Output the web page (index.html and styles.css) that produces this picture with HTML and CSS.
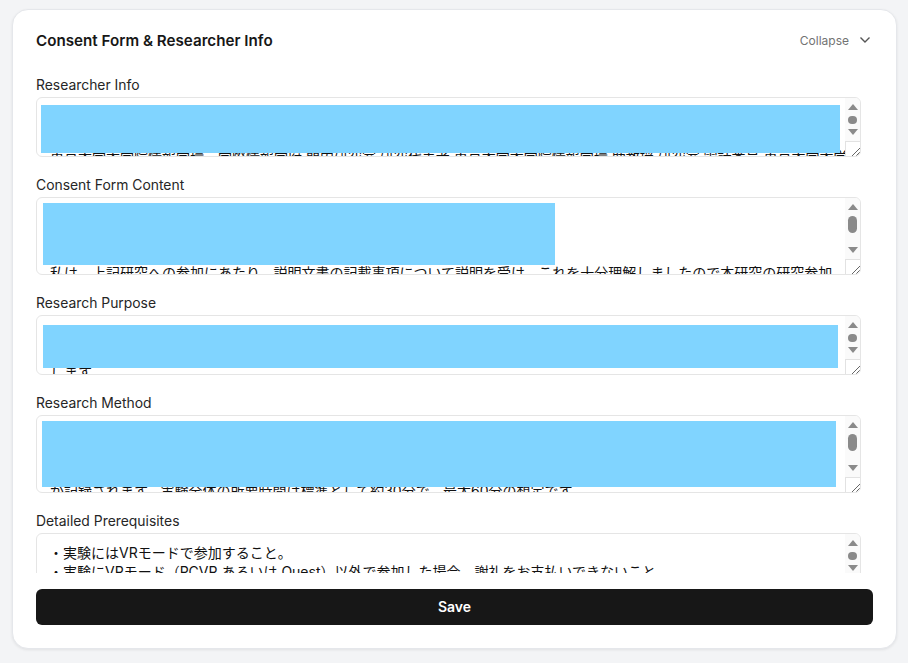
FILE: index.html
```html
<!DOCTYPE html>
<html lang="en">
<head>
<meta charset="utf-8">
<title>Consent Form &amp; Researcher Info</title>
<link rel="stylesheet" href="styles.css">
</head>
<body>
<svg class="defs" width="0" height="0" aria-hidden="true">
  <symbol id="up" viewBox="0 0 10 6"><path d="M5 0 10 6H0Z"/></symbol>
  <symbol id="down" viewBox="0 0 10 6"><path d="M0 0H10L5 6Z"/></symbol>
  <symbol id="grip" viewBox="0 0 15 15"><path d="M6 14 14 6M10 14 14 10" fill="none" stroke="#666" stroke-width="1"/></symbol>
</svg>
<main class="card">
  <header class="head">
    <h1 class="title">Consent Form &amp; Researcher Info</h1>
    <button class="collapse" type="button">Collapse
      <svg class="chev" viewBox="0 0 12 8" width="12" height="8"><path d="M1.5 1.5 6 6l4.5-4.5" fill="none" stroke="#555" stroke-width="1.4"/></svg>
    </button>
  </header>
  <div class="form">
    <section class="field">
      <label class="label">Researcher Info</label>
      <div class="box h60">
        <div class="text t1">東京大学大学院情報学環・学際情報学府 門内研究室 研究代表者 東京大学大学院情報学環 助教授 研究室 電話番号 東京大学大学院情報学環 連絡先情報</div>
        <div class="redact r1"></div>
        <div class="bar"><div class="track short"><svg class="arrow"><use href="#up"/></svg><span class="thumb small"></span><svg class="arrow"><use href="#down"/></svg></div><div class="grip"><svg width="15" height="15"><use href="#grip"/></svg></div></div>
      </div>
    </section>
    <section class="field">
      <label class="label">Consent Form Content</label>
      <div class="box h78">
        <div class="text t2">私は、上記研究への参加にあたり、説明文書の記載事項について説明を受け、これを十分理解しましたので本研究の研究参加</div>
        <div class="redact r2"></div>
        <div class="bar"><div class="track tall"><svg class="arrow"><use href="#up"/></svg><span class="thumb big"></span><svg class="arrow"><use href="#down"/></svg></div><div class="grip"><svg width="15" height="15"><use href="#grip"/></svg></div></div>
      </div>
    </section>
    <section class="field">
      <label class="label">Research Purpose</label>
      <div class="box h60">
        <div class="text t3">します</div>
        <div class="redact r3"></div>
        <div class="bar"><div class="track short"><svg class="arrow"><use href="#up"/></svg><span class="thumb small"></span><svg class="arrow"><use href="#down"/></svg></div><div class="grip"><svg width="15" height="15"><use href="#grip"/></svg></div></div>
      </div>
    </section>
    <section class="field">
      <label class="label">Research Method</label>
      <div class="box h78">
        <div class="text t4">が記録されます。実験全体の所要時間は標準として約30分で、最大60分の想定です。</div>
        <div class="redact r4"></div>
        <div class="bar"><div class="track tall"><svg class="arrow"><use href="#up"/></svg><span class="thumb big"></span><svg class="arrow"><use href="#down"/></svg></div><div class="grip"><svg width="15" height="15"><use href="#grip"/></svg></div></div>
      </div>
    </section>
    <section class="field">
      <label class="label">Detailed Prerequisites</label>
      <div class="box h60">
        <div class="text t5">・実験にはVRモードで参加すること。<br>・実験にVRモード（PCVR あるいは Quest）以外で参加した場合、謝礼をお支払いできないこと</div>
        <div class="bar"><div class="track short"><svg class="arrow"><use href="#up"/></svg><span class="thumb small"></span><svg class="arrow"><use href="#down"/></svg></div></div>
      </div>
    </section>
  </div>
  <button class="save" type="button">Save</button>
</main>
</body>
</html>
```

FILE: styles.css
```css
* { box-sizing: border-box; }
html, body { height: 100%; }
body {
  margin: 0;
  padding: 9px 11px 14px 12px;
  background: #f3f4f6;
  font-family: Inter, "Noto Sans CJK JP", "Liberation Sans", sans-serif;
  color: #171717;
  overflow: hidden;
}
.defs { position: absolute; }
.card {
  height: 640px;
  background: #fff;
  border: 1px solid #e5e7eb;
  border-radius: 16px;
  box-shadow: 0 1px 3px rgba(0, 0, 0, 0.08);
  padding: 16px 23px 23px;
  display: flex;
  flex-direction: column;
}
.head {
  display: flex;
  justify-content: space-between;
  align-items: center;
  height: 28px;
  flex: none;
}
.title { margin: 0; font-size: 15.2px; font-weight: 600; }
.collapse {
  display: flex;
  align-items: center;
  gap: 10px;
  padding: 0;
  border: 0;
  background: none;
  font: inherit;
  font-size: 12px;
  color: #737373;
}
.chev { display: block; margin-right: 2px; }
.form {
  flex: none;
  height: 497px;
  margin-top: 22px;
  padding-right: 12px;
  overflow: hidden;
  display: flex;
  flex-direction: column;
  gap: 19px;
}
.field { flex: none; display: flex; flex-direction: column; gap: 3px; }
.label { font-size: 13.9px; font-weight: 400; line-height: 18px; height: 18px; color: #262626; }
.box {
  position: relative;
  flex: none;
  border: 1px solid #e5e5e5;
  border-radius: 6px;
  overflow: hidden;
  background: #fff;
}
.h60 { height: 60px; }
.h78 { height: 78px; }
.text {
  font-size: 14px;
  line-height: 20px;
  white-space: nowrap;
  padding-left: 13px;
  color: #111;
}
.t1 { padding-top: 49px; }
.t2 { padding-top: 65px; }
.t3 { padding-top: 46px; }
.t4 { padding-top: 65px; }
.t5 { padding-top: 9px; padding-left: 12px; line-height: 19px; }
.redact { position: absolute; background: #80d4ff; }
.r1 { left: 4px; top: 7px; width: 799px; height: 48px; }
.r2 { left: 6px; top: 5px; width: 512px; height: 62px; }
.r3 { left: 6px; top: 9px; width: 795px; height: 43px; }
.r4 { left: 5px; top: 5px; width: 794px; height: 66px; }
.bar {
  position: absolute;
  top: 0;
  right: 0;
  bottom: 0;
  width: 15px;
  background: #fafafa;
  display: flex;
  flex-direction: column;
}
.track {
  flex: 1;
  display: flex;
  flex-direction: column;
  align-items: center;
  padding-top: 6px;
}
.arrow { width: 10px; height: 6px; fill: #8a8a8a; flex: none; }
.thumb { background: #8a8a8a; width: 9px; border-radius: 5px; flex: none; }
.small { height: 8px; margin: 6px 0 5px; }
.big { height: 17px; margin: 6px 0 14px; }
.grip {
  flex: none;
  height: 15px;
  border: 1px solid #e2e2e2;
  border-right: 0;
  border-bottom: 0;
  background: #fff;
}
.grip svg { display: block; }
.save {
  flex: none;
  height: 36px;
  margin-top: 16px;
  padding: 0 0 1px;
  background: #171717;
  color: #fff;
  border: 0;
  border-radius: 6px;
  font: inherit;
  font-size: 14px;
  font-weight: 600;
}
```
